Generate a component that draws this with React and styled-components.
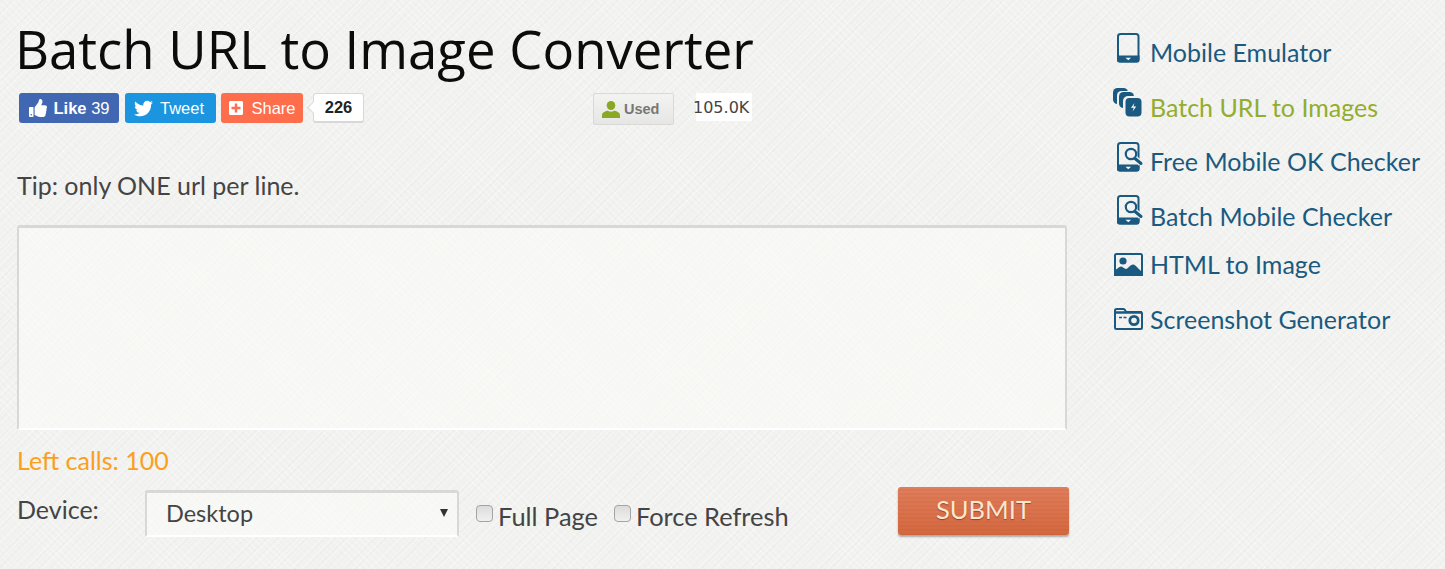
import React from 'react'
import styled, { createGlobalStyle } from 'styled-components'
import { FaThumbsUp, FaTwitter, FaPlusSquare } from 'react-icons/fa'

const GlobalStyle = createGlobalStyle`
  html, body {
    margin: 0;
    padding: 0;
    height: 569px;
    overflow: hidden;
  }
  body {
    font-family: Lato, "Liberation Sans", sans-serif;
    color: #444;
    background-color: #f1f1ef;
    background-image:
      repeating-linear-gradient(45deg, rgba(255,255,255,.28) 0 1px, transparent 1px 5px),
      repeating-linear-gradient(-45deg, rgba(255,255,255,.28) 0 1px, transparent 1px 4px),
      repeating-linear-gradient(-45deg, rgba(0,0,0,.012) 0 2px, transparent 2px 7px);
  }
`
const Page = styled.div`
  display: flex;
  width: 1445px;
  height: 569px;
`
const Main = styled.div`
  width: 1052px;
  margin-left: 17px;
  display: flex;
  flex-direction: column;
`
const Title = styled.h1`
  margin: 14px 0 0 -2px;
  font-family: "Open Sans", sans-serif;
  font-weight: 400;
  font-size: 52.7px;
  line-height: 70px;
  color: #0c0c0c;
  white-space: nowrap;
`
const ShareRow = styled.div`
  display: flex;
  align-items: flex-start;
  height: 32px;
  margin-top: 9px;
  margin-left: 2px;
`
const ShareButton = styled.div`
  box-sizing: border-box;
  display: flex;
  align-items: center;
  justify-content: center;
  gap: ${p => p.$iconGap}px;
  width: ${p => p.$w}px;
  height: 30px;
  margin-right: ${p => p.$gap}px;
  padding-right: ${p => p.$padRight || 0}px;
  border-radius: 3px;
  background: ${p => p.$bg};
  color: #fff;
  font-family: "Liberation Sans", sans-serif;
  font-size: 16.5px;
  b { font-weight: 700; }
`
const Count = styled.div`
  position: relative;
  box-sizing: border-box;
  display: flex;
  align-items: center;
  justify-content: center;
  width: 51px;
  height: 30px;
  margin-left: 10px;
  background: #fff;
  border: 1px solid #d8d8d8;
  border-bottom-width: 2px;
  border-radius: 3px;
  font-family: "Liberation Sans", sans-serif;
  font-size: 16.5px;
  font-weight: 700;
  color: #222;
  &::before {
    content: '';
    position: absolute;
    left: -5px;
    top: 9px;
    width: 8px;
    height: 8px;
    background: #fff;
    border-left: 1px solid #d8d8d8;
    border-bottom: 1px solid #d8d8d8;
    transform: rotate(45deg);
  }
`
const UsedBox = styled.div`
  box-sizing: border-box;
  display: flex;
  align-items: center;
  gap: 4px;
  width: 81px;
  height: 32px;
  margin-left: 229px;
  padding-left: 8px;
  background: linear-gradient(#f3f3f1, #e6e6e4);
  border: 1px solid #d9d9d7;
  border-radius: 2px;
  font-family: "Liberation Sans", sans-serif;
  font-size: 14.5px;
  font-weight: 700;
  color: #777;
`
const UsedCount = styled.div`
  width: 56px;
  height: 28px;
  margin-left: 22px;
  background: #fff;
  font-family: "DejaVu Sans", sans-serif;
  font-size: 16px;
  line-height: 29px;
  text-indent: -3px;
  white-space: nowrap;
  color: #444;
`
const Tip = styled.p`
  margin: 45px 0 0;
  font-size: 25px;
  line-height: 30px;
  color: #444;
`
const UrlBox = styled.textarea`
  display: block;
  box-sizing: border-box;
  width: 1050px;
  height: 205px;
  margin: 25px 0 0;
  padding: 10px;
  resize: none;
  outline: none;
  background: rgba(250, 250, 248, .65);
  border-style: solid;
  border-color: #d8d8d6;
  border-width: 3px 2px 2px;
  border-bottom-color: #fff;
  border-radius: 3px 3px 0 0;
`
const LeftCalls = styled.div`
  margin-top: 13px;
  font-size: 25px;
  line-height: 34px;
  color: #f9a01e;
`
const FormRow = styled.div`
  display: flex;
  align-items: flex-start;
  margin-top: 10px;
`
const DeviceLabel = styled.label`
  width: 128px;
  margin-top: 5px;
  font-size: 25px;
  line-height: 34px;
  color: #444;
`
const SelectWrap = styled.div`
  position: relative;
  width: 314px;
  height: 47px;
  margin-top: 3px;
  &::after {
    content: '';
    position: absolute;
    right: 11px;
    top: 19px;
    border-left: 4px solid transparent;
    border-right: 4px solid transparent;
    border-top: 8px solid #333;
  }
`
const DeviceSelect = styled.select`
  box-sizing: border-box;
  appearance: none;
  width: 100%;
  height: 100%;
  padding: 0 0 2px 19px;
  background: rgba(250, 250, 248, .65);
  border-style: solid;
  border-color: #d8d8d6;
  border-width: 3px 2px 2px;
  border-bottom-color: #fff;
  border-radius: 3px 3px 0 0;
  outline: none;
  font-family: Lato, sans-serif;
  font-size: 23.500px;
  color: #444;
`
const CheckLabel = styled.label`
  display: flex;
  align-items: center;
  gap: 5px;
  margin-left: ${p => p.$left}px;
  margin-top: 12px;
  font-size: 25.400px;
  line-height: 34px;
  color: #444;
`
const CheckBox = styled.input.attrs({ type: 'checkbox' })`
  appearance: none;
  box-sizing: border-box;
  width: 17px;
  height: 17px;
  margin: 0 0 5px;
  background: linear-gradient(#dcdcdc, #f0f0f0);
  border: 1px solid #a4a4a4;
  border-radius: 4px;
`
const SubmitButton = styled.button`
  box-sizing: border-box;
  width: 171px;
  height: 48px;
  margin-left: auto;
  margin-right: 0;
  padding: 0 0 4px;
  background: repeating-linear-gradient(transparent 0 2px, rgba(120, 40, 10, .05) 2px 4px), linear-gradient(#e07d5b, #d4683f);
  border: none;
  border-radius: 3px;
  box-shadow: 0 2px 2px rgba(0, 0, 0, .3);
  font-family: Lato, sans-serif;
  font-size: 25.500px;
  color: #fde6d2;
  text-shadow: 0 1px 1px rgba(100, 40, 10, .6);
`
const Side = styled.nav`
  display: flex;
  flex-direction: column;
  margin-left: 44px;
`
const SideLink = styled.a`
  display: flex;
  align-items: flex-start;
  height: ${p => p.$h}px;
  margin-top: ${p => p.$top || 0}px;
  font-size: 25px;
  line-height: 32px;
  white-space: nowrap;
  color: ${p => (p.$active ? '#93ad2e' : '#1a5a80')};
`
const IconSlot = styled.span`
  display: block;
  width: 37px;
  height: 32px;
  flex: none;
  svg { display: block; overflow: visible; margin-top: ${p => p.$up}px; }
`

const BLUE = '#1a5a80'
const PAPER = '#f1f1ef'

const UserIcon = () => (
  <svg width="18" height="17" viewBox="0 0 18 17">
    <ellipse cx="9" cy="4.500" rx="4.300" ry="4.500" fill="#8aa825" />
    <path d="M0 17v-3c0-2.500 3-3.500 5.500-4.500 1 1.500 6 1.500 7 0 2.500 1 5.500 2 5.500 4.500v3z" fill="#8aa825" />
  </svg>
)
const Tablet = ({ children }) => (
  <svg width="32" height="30" viewBox="0 0 32 30" fill="none">
    <rect x="5" y="1" width="20.500" height="27.500" rx="2.500" stroke={BLUE} strokeWidth="2" />
    <path d="M4 22.500h22.500v4.500a2.500 2.500 0 0 1-2.500 2.500H6.500A2.500 2.500 0 0 1 4 27z" fill={BLUE} />
    <path d="M12.500 24.800h5.500l-2.750 2.500z" fill="#fff" />
    {children}
  </svg>
)
const Lens = () => (
  <g fill="none">
    <path d="M22 16.500l6 5" stroke={PAPER} strokeWidth="6" />
    <circle cx="18" cy="12" r="5.200" stroke={BLUE} strokeWidth="2.200" />
    <path d="M22 16.500l6 5" stroke={BLUE} strokeWidth="3" strokeLinecap="round" />
  </g>
)
const Stack = () => (
  <svg width="32" height="30" viewBox="0 0 32 30">
    <rect x="0" y="0" width="15" height="16" rx="4.500" fill={BLUE} />
    <rect x="4" y="3" width="17" height="18" rx="4.500" fill={PAPER} />
    <rect x="6" y="4" width="15" height="16" rx="4.500" fill={BLUE} />
    <rect x="10" y="8" width="19" height="21" rx="5" fill={PAPER} />
    <rect x="12.500" y="10" width="16" height="18.500" rx="4" fill={BLUE} />
    <path d="M21.500 15l-3.500 4.800h2.800l-1.300 3.700 3.700-5h-2.800z" fill="#fff" />
  </svg>
)
const Picture = () => (
  <svg width="32" height="24" viewBox="0 0 32 24">
    <rect x="2" y="1" width="27" height="21" rx="1.500" fill="none" stroke={BLUE} strokeWidth="2" />
    <circle cx="10" cy="8" r="3.600" fill={BLUE} />
    <path d="M1 23v-5.500c3-1 5-4 7-4s3 2.500 5 2.500 4-4.500 7-4.500 6 6 10 7.500V23z" fill={BLUE} />
  </svg>
)
const Camera = () => (
  <svg width="32" height="24" viewBox="0 0 32 24" fill="none">
    <path d="M2 6V2.500A1.500 1.500 0 0 1 3.500 1h7a2 2 0 0 1 1.500 1l1 2h15A1.500 1.500 0 0 1 29 5.500V19.500a1.500 1.500 0 0 1-1.500 1.500h-24A1.500 1.500 0 0 1 2 19.500z" stroke={BLUE} strokeWidth="2" />
    <path d="M2 4.500h27" stroke={BLUE} strokeWidth="2.500" />
    <circle cx="21" cy="12.500" r="4.200" stroke={BLUE} strokeWidth="2.800" />
    <path d="M6 9.500h3M10.500 9.500h3" stroke={BLUE} strokeWidth="1.500" />
  </svg>
)

const links = [
  { label: 'Mobile Emulator', icon: <Tablet />, h: 55, top: 36, up: -3 },
  { label: 'Batch URL to Images', icon: <Stack />, h: 54, active: true, up: -3 },
  { label: 'Free Mobile OK Checker', icon: <Tablet><Lens /></Tablet>, h: 55, up: -3 },
  { label: 'Batch Mobile Checker', icon: <Tablet><Lens /></Tablet>, h: 48, up: -5 },
  { label: 'HTML to Image', icon: <Picture />, h: 55, up: 5 },
  { label: 'Screenshot Generator', icon: <Camera />, h: 32, up: 5 },
]

const App = () => {
  return (
    <Page>
      <GlobalStyle />
      <Main>
        <Title>Batch URL to Image Converter</Title>
        <ShareRow>
          <ShareButton $bg="#4267b2" $w={100} $gap={6} $iconGap={7}><FaThumbsUp size={18} /><span><b>Like</b> 39</span></ShareButton>
          <ShareButton $bg="#1b95e0" $w={91} $gap={5} $iconGap={7} $padRight={3}><FaTwitter size={19} />Tweet</ShareButton>
          <ShareButton $bg="#fe6d4c" $w={82} $gap={0} $iconGap={7}><FaPlusSquare size={16} />Share</ShareButton>
          <Count>226</Count>
          <UsedBox><UserIcon />Used</UsedBox>
          <UsedCount>105.0K</UsedCount>
        </ShareRow>
        <Tip>Tip: only ONE url per line.</Tip>
        <UrlBox />
        <LeftCalls>Left calls: 100</LeftCalls>
        <FormRow>
          <DeviceLabel>Device:</DeviceLabel>
          <SelectWrap>
            <DeviceSelect defaultValue="Desktop">
              <option>Desktop</option>
              <option>Mobile</option>
            </DeviceSelect>
          </SelectWrap>
          <CheckLabel $left={17}><CheckBox />Full Page</CheckLabel>
          <CheckLabel $left={16}><CheckBox />Force Refresh</CheckLabel>
          <SubmitButton>SUBMIT</SubmitButton>
        </FormRow>
      </Main>
      <Side>
        {links.map(l => (
          <SideLink key={l.label} $h={l.h} $top={l.top} $active={l.active}>
            <IconSlot $up={l.up}>{l.icon}</IconSlot>
            {l.label}
          </SideLink>
        ))}
      </Side>
    </Page>
  )
}

export default App
